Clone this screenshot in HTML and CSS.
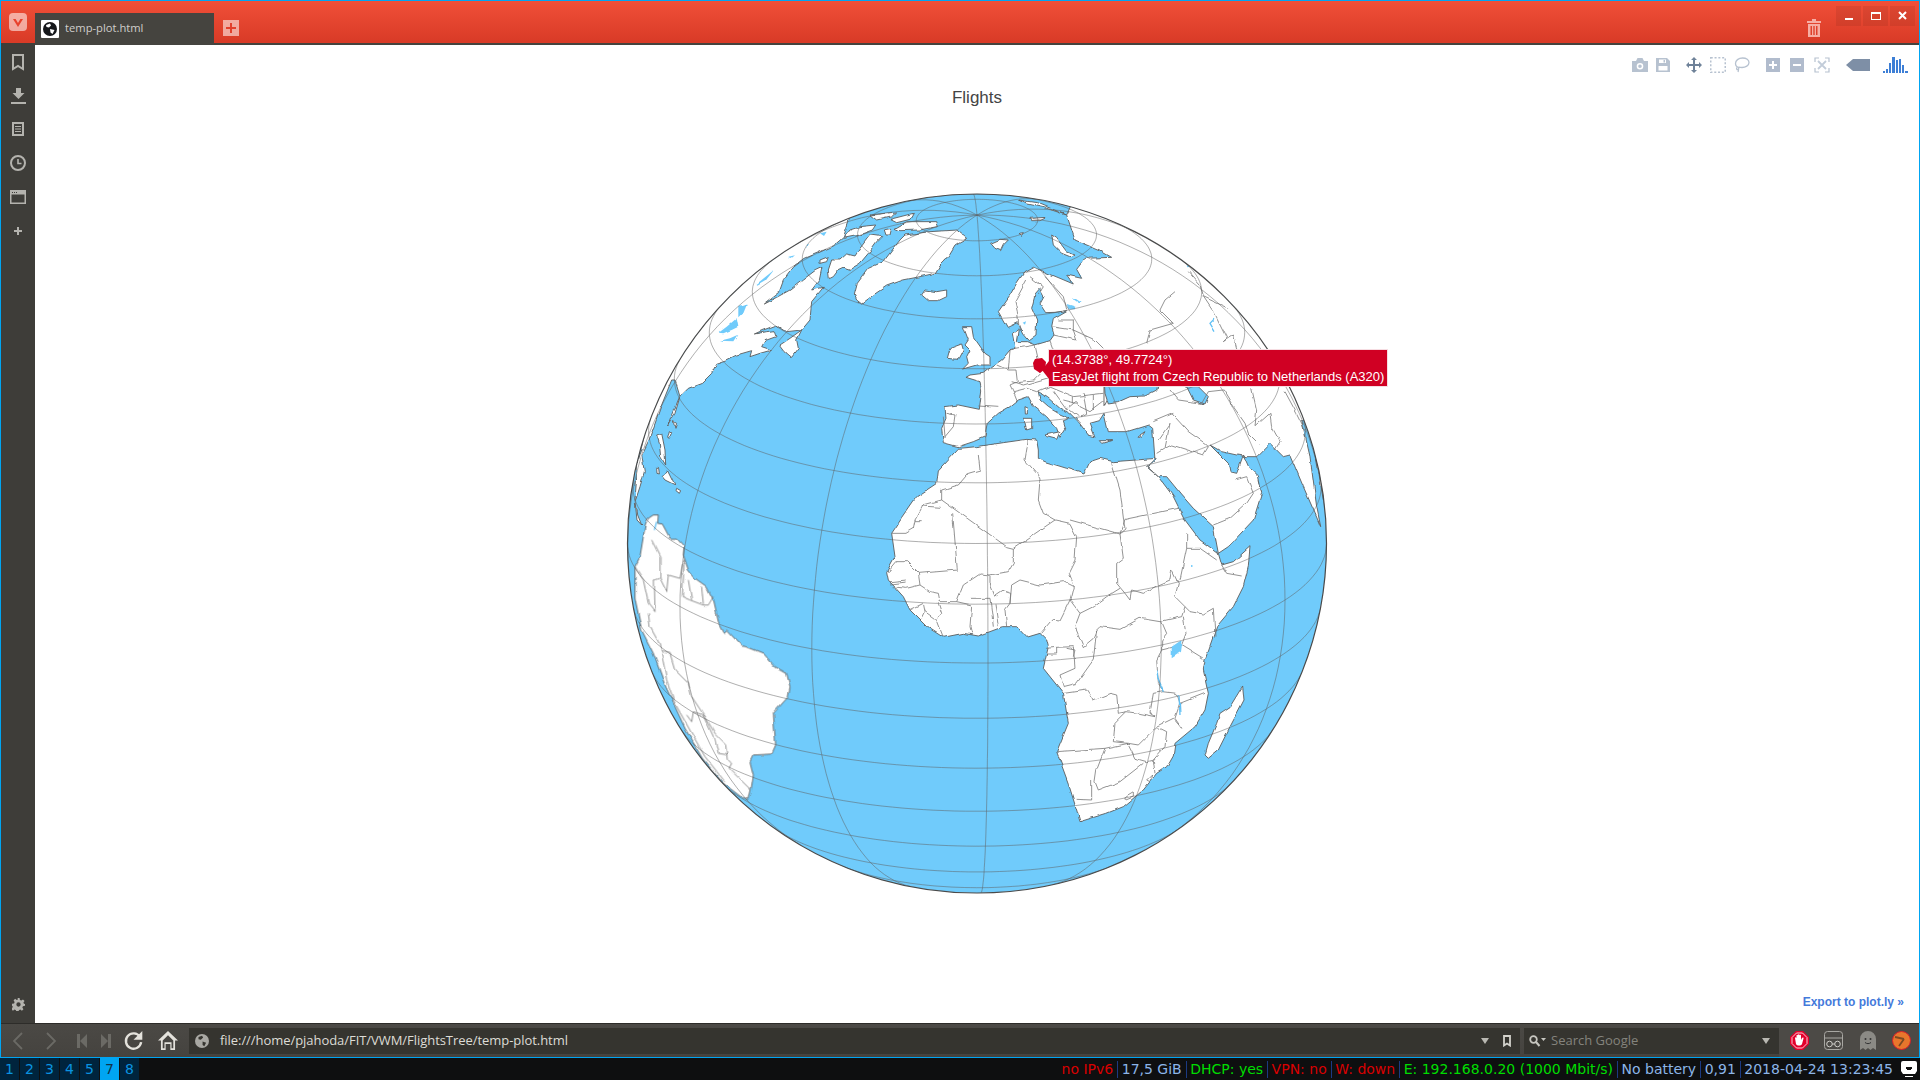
FILE: index.html
```html
<!DOCTYPE html>
<html lang="en">
<head>
<meta charset="utf-8">
<title>temp-plot.html</title>
<link rel="stylesheet" href="styles.css">
</head>
<body>
<div class="window">
  <header class="titlebar">
    <div class="logo"><svg width="18" height="18" viewBox="0 0 18 18"><rect width="18" height="18" rx="4" fill="#fff" fill-opacity=".55"/><path d="M4 6l5 8 5-8h-2.6L9 10 6.600 6z" fill="#e8412c"/></svg></div>
    <div class="tab">
      <span class="favicon"><svg width="18" height="18" viewBox="0 0 18 18"><rect width="18" height="18" rx="1" fill="#fff"/><circle cx="9" cy="9" r="7" fill="#15171a"/><path d="M5 5l4-1.500 1 2-2 2-2.500-.5zM9 9l4.500 1-2 4-2-1.500z" fill="#fff"/></svg></span>
      <span class="tab-title">temp-plot.html</span>
    </div>
    <div class="newtab"><svg width="16" height="16" viewBox="0 0 16 16"><path d="M7 3h2v4h4v2H9v4H7V9H3V7h4z" fill="#e2402d"/></svg></div>
    <div class="spacer"></div>
    <svg class="trash" width="14" height="18" viewBox="0 0 14 18"><path d="M0 2h5V0h4v2h5v2H0zM1 5h12v13H1zM3.500 7v9H5V7zM6.300 7v9h1.400V7zM9 7v9h1.500V7z" fill="#f6aea4" fill-rule="evenodd"/></svg>
    <div class="controls">
      <span class="ctl"><svg width="25" height="20"><rect x="9" y="12" width="8" height="2" fill="#fff"/></svg></span>
      <span class="ctl"><svg width="25" height="20"><rect x="8.500" y="6.500" width="9" height="7" fill="none" stroke="#fff"/><rect x="8" y="6" width="10" height="2" fill="#fff"/></svg></span>
      <span class="ctl"><svg width="25" height="20"><path d="M9 6l7 7M16 6l-7 7" stroke="#fff" stroke-width="2"/></svg></span>
    </div>
  </header>
  <div class="middle">
    <aside class="panel">
      <div class="panel-top">
        <svg width="12" height="17" viewBox="0 0 12 17"><path d="M1 1h10v14l-5-3-5 3z" fill="none" stroke="#b4b3ae" stroke-width="2"/></svg>
        <svg width="15" height="16" viewBox="0 0 15 16"><path d="M5 0h5v5h3.500L7.500 11 1.500 5H5zM0 14h15v2H0z" fill="#b4b3ae"/></svg>
        <svg width="12" height="14" viewBox="0 0 12 14"><path d="M0 0h12v14H0zM2 2v10h8V2zM3 4h6v1H3zM3 6.500h6v1H3zM3 9h6v1H3z" fill="#b4b3ae" fill-rule="evenodd"/></svg>
        <svg width="16" height="16" viewBox="0 0 16 16"><circle cx="8" cy="8" r="7" fill="none" stroke="#b4b3ae" stroke-width="2"/><path d="M8 4v4.500h3.500" fill="none" stroke="#b4b3ae" stroke-width="1.600"/></svg>
        <svg width="16" height="14" viewBox="0 0 16 14"><path d="M0 0h16v14H0zM1.500 4.500V12.500h13V4.500zM2 2v1h1V2zM4 2v1h1V2zM6 2v1h1V2z" fill="#b4b3ae" fill-rule="evenodd"/></svg>
        <svg width="8" height="8" viewBox="0 0 8 8"><path d="M3 0h2v3h3v2H5v3H3V5H0V3h3z" fill="#b4b3ae"/></svg>
      </div>
      <svg width="13" height="13" viewBox="0 0 24 24"><path d="M10 0h4l.7 3.500 2.600 1.100 3-2 2.800 2.800-2 3 1.100 2.600L24 10.700v3.600l-3.800.7-1.100 2.600 2 3-2.800 2.800-3-2-2.600 1.100-.7 3.500h-4l-.7-3.500-2.600-1.100-3 2-2.800-2.800 2-3L1.300 15 0 14.300v-3.600l3.800-.7 1.100-2.600-2-3 2.800-2.800 3 2 2.600-1.100zM12 8a4 4 0 100 8 4 4 0 000-8z" fill="#b4b3ae" fill-rule="evenodd"/></svg>
    </aside>
    <main class="plot">
      <svg class="map" viewBox="35 45 1884 978">
        <defs>
          <clipPath id="sphere"><circle cx="977" cy="543.500" r="349.500"/></clipPath>
          <filter id="coast" filterUnits="userSpaceOnUse" x="620" y="185" width="720" height="720">
            <feTurbulence type="fractalNoise" baseFrequency=".09" numOctaves="2" seed="4"/>
            <feDisplacementMap in="SourceGraphic" scale="3.500" xChannelSelector="R" yChannelSelector="G"/>
          </filter>
        </defs>
        <circle class="ocean" cx="977" cy="543.500" r="349.500"/>
        <g clip-path="url(#sphere)">
          <g filter="url(#coast)">
          <g transform="translate(620 180) scale(.33333)">
            <path class="land" d="M690,112 L670,172 L640,198 L600,216 L555,235 L520,262 L490,302 L478,335 L430,372 L470,352 L510,330 L548,300 L585,272 L606,262 L598,300 L575,330 L610,322 L575,365 L570,420 L545,450 L500,455 L470,435 L430,450 L403,462 L440,455 L462,452 L468,470 L435,482 L425,500 L455,510 L420,520 L390,530 L395,512 L350,525 L320,540 L290,550 L275,580 L245,610 L205,625 L178,652 L143,738 L165,700 L180,650 L165,600 L155,600 L125,675 L100,745 L87,780 L65,825 L73,875 L60,920 L47,960 L53,1005 L65,1035 L51,1020 L45,960 L51,880 L53,840 L65,800 L72,770 L40,770 L100,600 L200,400 L400,200 L500,130 Z"/>
            <path class="land" d="M480,495 L510,475 L545,450 L530,480 L535,505 L515,532 L495,515 Z"/>
            <path class="land" d="M628,296 L625,270 L635,240 L660,240 L680,222 L705,228 L720,205 L750,165 L785,170 L770,185 L745,220 L720,250 L690,268 L672,262 L655,270 L640,290 Z"/>
            <path class="land" d="M825,145 L860,125 L950,125 L955,140 L900,150 L840,152 Z"/>
            <path class="land" d="M670,175 L690,150 L720,140 L770,135 L760,150 L720,165 Z"/>
            <path class="land" d="M750,105 L830,96 L815,110 L770,120 Z"/>
            <path class="land" d="M810,118 L880,100 L870,118 L830,128 Z"/>
            <path class="land" d="M790,150 L815,145 L810,165 L795,165 Z"/>
            <path class="land" d="M600,240 L625,230 L620,245 L600,250 Z"/>
            <path class="land" d="M703,345 L712,310 L745,265 L790,245 L840,180 L855,165 L930,155 L1010,150 L1040,175 L1020,185 L1005,195 L990,220 L975,240 L960,255 L945,280 L900,290 L850,300 L800,318 L760,345 L725,372 L710,360 Z"/>
            <path class="land" d="M905,345 L915,330 L950,335 L980,330 L980,350 L955,362 L925,362 Z"/>
            <path class="land" d="M1112,190 L1140,178 L1165,180 L1150,195 L1142,212 L1125,205 Z"/>
            <path class="land" d="M1295,165 L1310,175 L1340,215 L1365,225 L1355,232 L1325,220 L1300,195 Z"/>
            <path class="land" d="M1230,115 L1280,112 L1260,122 L1235,122 Z"/>
            <path class="land" d="M1195,60 L1250,68 L1340,105 L1280,85 L1220,72 Z"/>
            <path class="land" d="M1197,160 L1210,158 L1205,166 Z"/>
            <path class="land" d="M110,765 L125,760 L135,810 L137,855 L122,830 L118,790 Z"/>
            <path class="land" d="M127,890 L143,870 L165,915 L135,900 Z"/>
            <path class="land" d="M107,865 L113,865 L115,882 L108,880 Z"/>
            <path class="land" d="M170,925 L182,932 L178,940 L168,932 Z"/>
            <path class="land" d="M160,725 L170,730 L165,745 Z"/>
            <path class="land" d="M148,755 L155,760 L148,778 L143,775 Z"/>
            <path class="lake" d="M296,458 L320,440 L350,415 L355,440 L335,450 L310,460 Z"/>
            <path class="lake" d="M300,482 L340,484 L352,465 L330,475 Z"/>
            <path class="lake" d="M355,378 L382,370 L370,400 L355,415 Z"/>
            <path class="lake" d="M410,312 L462,270 L440,298 L412,314 Z"/>
            <path class="lake" d="M600,160 L620,155 L612,168 Z"/>
            <path class="lake" d="M690,125 L715,118 L700,128 Z"/>
            <path class="lake" d="M505,230 L525,226 L515,234 Z"/>
            <path class="lake" d="M556,195 L564,192 L560,200 Z"/>
          </g>
          <g transform="translate(625 440) scale(.33333)">
            <path class="land" d="M70,235 L85,225 L100,225 L98,250 L112,252 L135,295 L155,295 L177,320 L175,345 L190,390 L210,415 L245,440 L265,480 L280,545 L297,578 L305,570 L350,618 L365,620 L415,640 L450,680 L485,700 L495,740 L490,770 L445,820 L452,915 L440,942 L385,945 L375,965 L385,1005 L378,1050 L372,1078 L350,1072 L295,1030 L232,955 L180,865 L118,730 L85,640 L50,570 L30,475 L30,380 L45,350 L55,290 L62,250 Z"/>
            <path class="border" d="M80,300 L105,350 L105,415 L125,455 L130,405 L165,415 L172,375 L178,360 L172,470 L195,480 L235,495 L250,495 L265,470"/>
            <path class="border" d="M190,420 L200,480 M230,440 L235,492"/>
            <path class="border" d="M30,380 L55,420 L70,490 L90,515 L88,420 L102,415"/>
            <path class="border" d="M70,520 L75,560 L100,605 L110,635 L135,640 L150,690 L190,730 L200,770 L240,830 L270,880 L305,915 L310,960 L320,970 L312,985 L378,1050"/>
            <path class="border" d="M110,640 L125,720 L150,790 L200,880 L240,950 L300,1025"/>
            <path class="border" d="M205,815 L235,825 L270,900 L280,940 L310,945"/>
            <path class="border" d="M205,815 L200,845 L185,825"/>
            <path class="lake thin" d="M95,245 L88,270"/>
          </g>
          <g transform="translate(880 430) scale(.33333)">
            <path class="land" d="M235,55 L290,50 L370,38 L440,28 L470,30 L475,60 L475,85 L495,95 L560,115 L612,132 L630,95 L660,85 L700,95 L770,90 L825,85 L800,110 L835,140 L880,200 L915,270 L960,330 L1015,370 L1025,405 L1060,395 L1110,350 L1105,410 L1090,470 L1060,530 L1010,590 L975,690 L970,720 L985,790 L975,840 L945,890 L885,940 L880,975 L860,1010 L830,1030 L790,1080 L730,1130 L680,1150 L600,1175 L590,1140 L565,1060 L530,965 L565,880 L550,790 L490,715 L505,650 L500,630 L480,610 L440,622 L410,590 L370,590 L295,618 L250,610 L190,622 L140,590 L90,540 L70,500 L25,450 L20,425 L45,380 L35,310 L65,265 L110,200 L170,160 L175,120 Z"/>
            <path class="land" d="M975,975 L985,940 L1010,880 L1020,850 L1050,830 L1088,768 L1092,810 L1045,900 L1015,960 L985,985 Z"/>
            <path class="border" d="M295,75 L300,120 L265,130 L235,165 L185,180 L185,210 L130,225 L105,270 L100,295 L75,310 L35,310"/>
            <path class="border" d="M125,228 L182,232 M105,272 L125,272"/>
            <path class="border" d="M185,210 L380,350 L400,355 L525,270"/>
            <path class="border" d="M218,250 L232,420 L115,430 L120,465 L150,485 L175,490 L180,515 L230,515 L250,465 L300,432 L330,435 L385,425 L400,400 L400,355"/>
            <path class="border" d="M115,430 L80,395 L50,395 L25,425 M120,465 L80,475 L35,470"/>
            <path class="border" d="M30,455 L80,450 M30,462 L80,456"/>
            <path class="border" d="M90,540 L130,520 L135,545 L125,565 M135,545 L170,570 L190,622 M175,520 L185,550 L170,570"/>
            <path class="border" d="M230,515 L275,525 L270,590 L275,610 M275,505 L330,505 L340,590 M345,520 L355,590 M380,590 L375,540 L390,520 L392,490 L370,483 L345,500 L330,460 L330,435"/>
            <path class="border" d="M390,520 L395,465 L420,450 L480,465 L550,455 L580,470 L570,510 L540,570 L520,568 L485,610"/>
            <path class="border" d="M445,30 L435,90 L470,130 L480,150 L475,210 L490,250 L525,270 L570,280 L590,320 L585,390 L565,430 L580,470"/>
            <path class="border" d="M570,270 L720,312 L735,268 L895,235 M695,100 L720,180 L735,300 L720,312 L730,385 L710,400 L710,460 L735,490 L750,510 L755,480 L790,490 L835,465 L870,450 L875,420 L895,460 L885,500 L915,530 L930,545 L970,552 L1000,535 L1005,620"/>
            <path class="border" d="M920,310 L920,355 L900,450 M920,355 L960,355 L1010,390 M1025,405 L1040,430 L1085,438"/>
            <path class="border" d="M570,510 L600,550 L640,530 L680,500 L720,475 M600,550 L585,590 L610,650 L640,625 L650,600 L660,590 L720,598 L780,565 L840,575 L860,570 L905,560 L915,530 M845,575 L860,610 L845,630 L845,660 L830,690 L835,760 L850,785 L820,790 L810,850 L825,860 L775,850 L740,845 L715,850 L710,795 L690,790 L640,810 L620,780 L552,790"/>
            <path class="border" d="M910,560 L918,610 L905,645 L970,685 M845,660 L905,645"/>
            <path class="border" d="M498,655 L530,652 L530,672 L498,672 M530,652 L580,650 L585,715 L540,735 L550,770 L590,760 L640,690 L650,600 M560,655 L585,660 L580,680"/>
            <path class="border" d="M850,785 L890,790 L900,820 L885,865 L905,895 L880,865 L830,890 L775,945 L745,940 L700,935 L705,880 L740,845 M830,890 L860,905 L855,950 L820,990 L800,995 L765,985 L745,945 M900,820 L975,790 M820,990 L825,1030"/>
            <path class="border" d="M530,965 L675,955 L745,940 M675,955 L650,1020 L645,1055 L655,1080 L720,1055 L790,1000 M635,1050 L635,1110 L590,1108"/>
            <path class="border" d="M735,1100 L760,1085 L760,1098 L735,1108 Z M800,1050 L815,1035 L810,1055 Z"/>
            <path class="lake" d="M875,650 L905,630 L900,665 L875,682 Z"/>
            <path class="lake thin" d="M830,720 L835,750 L850,785 M897,795 L900,855"/>
            <circle class="lakedot" cx="938" cy="408" r="3"/>
          </g>
          <g transform="translate(900 180) scale(.33333)">
            <path class="land" d="M175,800 L130,788 L125,745 L138,715 L135,680 L175,675 L238,688 L245,630 L240,605 L198,592 L210,585 L250,580 L275,560 L305,540 L330,510 L348,505 L340,460 L358,448 L352,485 L380,485 L405,495 L450,482 L462,465 L455,440 L460,415 L500,392 L465,397 L437,398 L420,372 L432,350 L420,328 L405,345 L395,385 L410,420 L408,465 L385,482 L368,462 L352,428 L322,442 L295,395 L330,345 L350,310 L372,278 L400,262 L432,275 L480,295 L520,312 L500,285 L545,295 L530,268 L555,235 L635,232 L600,212 L525,180 L500,105 L520,60 L700,100 L1000,300 L1250,650 L1300,960 L1270,960 L1230,720 L1205,720 L1230,830 L1250,980 L1262,1040 L1245,1000 L1210,920 L1170,825 L1150,830 L1110,790 L1070,830 L1040,830 L1010,825 L965,815 L930,795 L965,830 L985,850 L990,875 L1010,880 L1030,825 L1048,865 L1075,890 L1085,940 L1060,1020 L985,1100 L955,1120 L940,1040 L880,985 L845,945 L800,890 L775,890 L742,860 L765,840 L758,745 L745,735 L680,755 L625,755 L612,700 L598,722 L570,730 L585,770 L565,765 L535,725 L510,700 L480,685 L440,650 L415,635 L420,660 L445,682 L475,700 L510,715 L490,722 L497,745 L480,772 L470,745 L440,710 L400,678 L385,650 L355,660 L330,680 L295,700 L262,730 L255,770 L220,785 Z"/>
            <path class="land" d="M435,765 L480,755 L470,778 L440,770 Z"/>
            <path class="land" d="M372,715 L395,715 L395,745 L380,750 Z"/>
            <path class="land" d="M375,680 L385,685 L385,702 L376,702 Z"/>
            <path class="land" d="M598,782 L635,782 L605,790 Z"/>
            <path class="land" d="M712,770 L735,755 L722,775 Z"/>
            <path class="land" d="M612,610 L650,605 L612,680 Z"/>
            <path class="sea" d="M615,640 L612,590 L780,590 L770,630 L735,648 L690,650 L650,668 L625,672 Z"/>
            <path class="sea" d="M860,620 L880,660 L915,672 L925,650 L895,620 Z"/>
            <path class="lake" d="M500,372 L520,378 L525,388 L505,388 Z"/>
            <path class="lake" d="M520,352 L545,368 L538,370 L520,358 Z"/>
            <path class="lake" d="M368,428 L378,424 L375,434 Z"/>
            <path class="lake thin" d="M942,418 L930,430 L945,455"/>
            <path class="lake" d="M860,255 L870,260 L862,262 Z"/>
          </g>
          <g transform="translate(930 270) scale(.33333)">
            <path class="land" d="M100,170 L125,170 L130,200 L165,250 L180,260 L180,285 L140,285 L98,297 L115,280 L110,260 L120,240 L105,225 L115,210 Z"/>
            <path class="land" d="M52,265 L60,235 L95,222 L100,240 L85,268 Z"/>
            <path class="border" d="M50,430 L75,435 L70,470 L45,500 L40,440"/>
            <path class="border" d="M145,408 L205,412 M200,285 L235,300 L258,300 L262,335 L240,345 L250,365 L262,395"/>
            <path class="border" d="M240,242 L235,298 M258,235 L315,225 L325,270 L345,295 L310,330 L262,335"/>
            <path class="border" d="M245,335 L280,345 L350,325 M250,365 L290,355 L320,365 L357,350 L430,380 L520,370"/>
            <path class="border" d="M255,95 L262,125 L268,180 M255,95 L290,30 M300,20 L340,50 L325,75 M345,20 L400,80 L410,118"/>
            <path class="border" d="M365,170 L430,180 L430,150 L385,150 M370,195 L440,210 L430,180 M430,180 L495,210 L520,235 M360,212 L370,240 L356,238"/>
            <path class="border" d="M370,365 L410,420 L440,395 L450,410 L480,425 L520,395 M430,380 L430,400 M460,370 L470,430 L450,440 M490,375 L490,420"/>
            <path class="border" d="M400,390 L440,400 M420,420 L445,440"/>
          </g>
          <g transform="translate(1090 260) scale(.33333)">
            <path class="border" d="M255,95 L225,120 L210,150 L250,190 L180,210 L170,250 M295,35 L330,75 L340,110 L415,145 M340,110 L370,155 L410,235 L400,245 L430,225 L440,265"/>
            <path class="border" d="M400,390 L430,440 L465,490 L475,520 L505,550 M485,385 L500,450 L495,500 L540,460 L545,500 L570,545 L555,570 M240,390 L265,420 L335,430 L355,395 L400,390"/>
            <path class="border" d="M250,460 L190,485 M245,460 L295,515 L345,550 L355,560 M225,565 L245,555 L340,585 L355,560"/>
            <path class="border" d="M205,540 L240,490 L225,565 L200,580 M370,795 L420,775 L470,730 L490,700 L470,650 L435,660 M585,395 L620,460 L650,520"/>
          </g>
          </g>
          <path id="graticule" class="grid"/>
        </g>
        <circle class="rim" cx="977" cy="543.500" r="349.500"/>
        <path class="marker" d="M1035 359l7-1 4 4-1 7-5 4-6-4-1-6z"/>
      </svg>
      <div class="modebar">
        <div class="mb-group">
          <svg width="16" height="14" viewBox="0 0 16 14"><path d="M0 3h4l1.500-3h5L12 3h4v11H0zM8 5a3.300 3.300 0 100 6.600A3.300 3.300 0 008 5zM8 6.500a1.800 1.800 0 110 3.600 1.800 1.800 0 010-3.600z" fill="#b7c2d0" fill-rule="evenodd"/></svg>
          <svg width="14" height="14" viewBox="0 0 14 14"><path d="M0 0h11l3 3v11H0zM3 1.500V5h7V1.500zM7.500 2h1.500v2.500H7.500zM2.500 8v4.500h9V8z" fill="#b7c2d0" fill-rule="evenodd"/></svg>
        </div>
        <div class="mb-group">
          <svg width="16" height="16" viewBox="0 0 16 16"><path d="M8 0l3 3H9v4h4V5l3 3-3 3V9H9v4h2l-3 3-3-3h2V9H3v2L0 8l3-3v2h4V3H5z" fill="#6f8299"/></svg>
          <svg width="16" height="16" viewBox="0 0 16 16"><rect x=".75" y=".75" width="14.500" height="14.500" fill="none" stroke="#b7c2d0" stroke-width="1.500" stroke-dasharray="2 1.800"/></svg>
          <svg width="16" height="16" viewBox="0 0 16 16"><path d="M8.500 1C4.500 1 1.500 3.500 1.500 6.500c0 2 1.500 3.500 3.500 4 M8.500 1c4 0 6.500 2 6.500 4.500 0 3-3.500 5-7 5-1 0-2 0-3-.3 M3 10.500c-1 1 0 2.500 1 2 1 0 1-1.500 0-2 M4.500 12c0 1 0 2-.5 3" fill="none" stroke="#b7c2d0" stroke-width="1.300"/></svg>
        </div>
        <div class="mb-group wide">
          <svg width="14" height="14" viewBox="0 0 14 14"><path d="M0 0h14v14H0zM6 3v3H3v2h3v3h2V8h3V6H8V3z" fill="#b1bccd" fill-rule="evenodd"/></svg>
          <svg width="14" height="14" viewBox="0 0 14 14"><path d="M0 0h14v14H0zM3 6v2h8V6z" fill="#b1bccd" fill-rule="evenodd"/></svg>
          <svg width="16" height="16" viewBox="0 0 16 16"><path d="M1 5V1h4M11 1h4v4M15 11v4h-4M5 15H1v-4" fill="none" stroke="#b7c2d0" stroke-width="1.200"/><path d="M4 4l8 8M12 4l-8 8" stroke="#c2ccd9" stroke-width="1.800"/></svg>
        </div>
        <div class="mb-group">
          <svg width="24" height="12" viewBox="0 0 24 12"><path d="M0 6l7-6h17v12H7z" fill="#7e8fa6"/></svg>
        </div>
        <div class="mb-group logo-group">
          <svg width="25" height="16" viewBox="0 0 25 16"><path d="M0 14h2v2H0zM3 12h2v4H3zM6 6h2v10H6zM9 0h3v16H9zM13 3h2v13h-2zM16 2h2v14h-2zM19 8h2v8h-2zM22 14h3v2h-3z" fill="#3d7fd6"/></svg>
        </div>
      </div>
      <div class="plot-title">Flights</div>
      <div class="hover"><div>(14.3738°, 49.7724°)</div><div>EasyJet flight from Czech Republic to Netherlands (A320)</div></div>
      <a class="export">Export to plot.ly »</a>
    </main>
  </div>
  <div class="addressbar">
    <div class="nav">
      <svg class="nb" width="10" height="18" viewBox="0 0 10 18"><path d="M9 1L1 9l8 8" fill="none" stroke="#6b6a65" stroke-width="1.800"/></svg>
      <svg class="nf" width="10" height="18" viewBox="0 0 10 18"><path d="M1 1l8 8-8 8" fill="none" stroke="#6b6a65" stroke-width="1.800"/></svg>
      <svg class="nr" width="10" height="14" viewBox="0 0 10 14"><path d="M0 0h3v14H0zM10 0v14L3 7z" fill="#6b6a65"/></svg>
      <svg class="nl" width="10" height="14" viewBox="0 0 10 14"><path d="M10 0H7v14h3zM0 0v14l7-7z" fill="#6b6a65"/></svg>
      <svg class="nre" width="19" height="20" viewBox="0 0 16 17"><path d="M13.500 5A6.500 6.500 0 1014.500 9.500" fill="none" stroke="#e4e2dc" stroke-width="2"/><path d="M15.500 0v7.500H8z" fill="#e4e2dc"/></svg>
      <svg class="nh" width="20" height="19" viewBox="0 0 17 16"><path d="M8.500 0l8.500 8h-2.500v8h-4v-5h-4v5h-4V8H0zM4 8v6.500h1.500v-5h6v5H13V8L8.500 3.500z" fill="#e4e2dc" fill-rule="evenodd"/></svg>
    </div>
    <div class="urlfield">
      <svg width="14" height="14" viewBox="0 0 12 12"><circle cx="6" cy="6" r="6" fill="#a9a8a3"/><path d="M3 2.500l3-1 1 1.500L5 5 3 4.500zM6.500 6.500l3 1-1.500 3-1.500-1z" fill="#35342f"/></svg>
      <span class="url">file:///home/pjahoda/FIT/VWM/FlightsTree/temp-plot.html</span>
      <span class="drop"></span>
      <svg class="bm" width="8" height="12" viewBox="0 0 8 12"><path d="M1 1h6v9.500L4 8.500l-3 2z" fill="none" stroke="#d3d2cc" stroke-width="1.800"/></svg>
    </div>
    <div class="searchfield">
      <svg width="17" height="12" viewBox="0 0 17 12"><circle cx="4.500" cy="4.500" r="3.300" fill="none" stroke="#c7c6c0" stroke-width="1.800"/><path d="M7 7l3.500 4" stroke="#c7c6c0" stroke-width="2"/><path d="M12 3h5l-2.500 3z" fill="#c7c6c0"/></svg>
      <span class="search-text">Search Google</span>
      <span class="drop"></span>
    </div>
    <div class="ext">
      <svg width="19" height="19" viewBox="0 0 19 19"><path d="M6 0h7l6 6v7l-6 6H6l-6-6V6z" fill="#e3002b"/><path d="M6.500 2h6l4.500 4.500v6L12.500 17h-6L2 12.500v-6z" fill="none" stroke="#fff" stroke-width=".8"/><path d="M5 7c0-1 1.300-1 1.500 0V4.500c0-1 1.500-1 1.500 0V4c0-1 1.500-1 1.500 0v.5c0-1 1.500-1 1.500 0V9l1-2c.6-1 2-.500 1.500.5L12 13c-1 2-5 2-6 0z" fill="#fff"/></svg>
      <svg width="19" height="19" viewBox="0 0 19 19"><rect x=".5" y=".5" width="18" height="18" rx="3" fill="none" stroke="#a8a7a2"/><path d="M1 7h17" stroke="#a8a7a2"/><circle cx="5.500" cy="13" r="2.800" fill="none" stroke="#cfcec9"/><circle cx="13.500" cy="13" r="2.800" fill="none" stroke="#cfcec9"/><path d="M8.300 13h2.400" stroke="#cfcec9"/></svg>
      <svg width="16" height="19" viewBox="0 0 16 19"><path d="M0 19V8a8 8 0 0116 0v11l-3-2-2.500 2L8 17l-2.500 2L3 17z" fill="#8b8a85"/><circle cx="5.500" cy="8" r="1" fill="#333"/><circle cx="10.500" cy="8" r="1" fill="#333"/><path d="M5 11.500c2 1.500 4 1.500 6 0" stroke="#333" fill="none"/></svg>
      <svg width="19" height="19" viewBox="0 0 19 19"><circle cx="9.500" cy="9.500" r="9" fill="#e8762c" stroke="#d9202a"/><path d="M3 6l9 2M12 8l-5 7" stroke="#7c4a22" stroke-width="1.800" fill="none"/></svg>
    </div>
  </div>
</div>
<footer class="statusbar">
  <div class="workspaces">
    <span class="ws">1</span><span class="ws">2</span><span class="ws">3</span><span class="ws">4</span><span class="ws">5</span><span class="ws active">7</span><span class="ws">8</span>
  </div>
  <div class="status">
    <span class="si red">no IPv6</span><span class="si blue">17,5 GiB</span><span class="si green">DHCP: yes</span><span class="si red">VPN: no</span><span class="si red">W: down</span><span class="si green">E: 192.168.0.20 (1000 Mbit/s)</span><span class="si blue">No battery</span><span class="si blue">0,91</span><span class="si blue last">2018-04-24 13:23:45</span>
    <svg class="tray" width="16" height="16" viewBox="0 0 16 16"><path d="M2 0h12a2 2 0 012 2v8l-2 3H2l-2-3V2a2 2 0 012-2zM4 15h8v1H4z" fill="#fff"/><path d="M5 6h6v2h-1v1H6V8H5z" fill="#111"/></svg>
  </div>
</footer>
<script src="graticule.js"></script>
</body>
</html>
```
FILE: styles.css
```css
* { box-sizing: border-box; }
html, body { margin: 0; height: 100%; overflow: hidden; }
body { display: flex; flex-direction: column; width: 1920px; height: 1080px; background: #0e0f10; font-family: "Open Sans", "Noto Sans", sans-serif; }
.window { height: 1058px; display: flex; flex-direction: column; border: 1px solid #00a5f2; }
.titlebar { height: 44px; flex: none; display: flex; align-items: flex-start; background: linear-gradient(#f04f38, #d93b27 97%); border-bottom: 2px solid #44433e; }
.logo { width: 18px; height: 18px; margin: 12px 0 0 8px; }
.logo svg, .favicon svg, .newtab svg { display: block; }
.tab { width: 179px; height: 32px; margin: 12px 0 0 8px; background: #45443f; display: flex; align-items: center; padding-left: 6px; }
.favicon { width: 18px; height: 18px; }
.tab-title { margin-left: 6px; font-size: 11.200px; color: #cfcecb; position: relative; top: -2px; }
.newtab { width: 16px; height: 16px; margin: 19px 0 0 9px; background: rgba(255,255,255,.55); }
.spacer { flex: 1; }
.trash { margin: 18px 15px 0 0; }
.controls { display: flex; gap: 2px; margin: 5px 4px 0 0; }
.ctl { width: 25px; height: 20px; background: rgba(0,0,0,.07); }
.ctl svg { display: block; }
.middle { height: 978px; flex: none; display: flex; }
.panel { width: 34px; flex: none; background: #3e3d39; display: flex; flex-direction: column; align-items: center; justify-content: space-between; padding: 8px 0 12px; margin-top: -2px; position: relative; }
.panel-top { display: flex; flex-direction: column; align-items: center; }
.panel-top svg { display: block; }
.panel-top svg:nth-child(1) { margin-top: 3px; }
.panel-top svg:nth-child(2) { margin-top: 17px; }
.panel-top svg:nth-child(3) { margin-top: 18px; }
.panel-top svg:nth-child(4) { margin-top: 19px; }
.panel-top svg:nth-child(5) { margin-top: 19px; }
.panel-top svg:nth-child(6) { margin-top: 23px; }
.plot { flex: 1; position: relative; background: #fff; overflow: hidden; }
.map { display: block; width: 100%; height: 100%; }
.ocean { fill: #70cbfb; }
.land { fill: #fff; stroke: #5c5c5c; stroke-width: .9; vector-effect: non-scaling-stroke; stroke-linejoin: round; }
.border { fill: none; stroke: #777; stroke-width: .8; vector-effect: non-scaling-stroke; stroke-linejoin: round; }
.sea { fill: #70cbfb; stroke: #5c5c5c; stroke-width: .9; vector-effect: non-scaling-stroke; }
.lake { fill: #70cbfb; stroke: none; }
.lake.thin { fill: none; stroke: #5fc0f5; stroke-width: 1.300; vector-effect: non-scaling-stroke; }
.lakedot { fill: #70cbfb; }
.grid { fill: none; stroke: rgba(95,95,95,.5); stroke-width: 1; }
.rim { fill: none; stroke: #4a4a4a; stroke-width: 1.200; }
.marker { fill: #d00023; }
.modebar { position: absolute; top: 12px; right: 11px; display: flex; align-items: center; gap: 16px; }
.mb-group { display: flex; align-items: center; gap: 8px; }
.mb-group.wide { gap: 10px; }
.mb-group.logo-group { margin-left: -3px; }
.mb-group svg { display: block; }
.plot-title { position: absolute; top: 42px; left: 0; width: 1884px; text-align: center; font: 17px/22px "Liberation Sans", Arial, sans-serif; color: #444; }
.hover { position: absolute; left: 1013px; top: 304px; width: 340px; height: 38px; background: #d00023; border: 1px solid #f6dde2; padding: 1px 3px; font: 13px/17px "Liberation Sans", Arial, sans-serif; color: #fff; white-space: nowrap; }
.hover::before { content: ""; position: absolute; left: -7px; top: 11px; border-style: solid; border-width: 9px 7px 9px 0; border-color: transparent #d00023 transparent transparent; }
.export { position: absolute; right: 15px; top: 950px; font: bold 12px/14px "Liberation Sans", Arial, sans-serif; color: #447adb; }
.addressbar { height: 34px; flex: none; display: flex; align-items: center; background: linear-gradient(#4b4945, #45433f); border-top: 1px solid #2d2c29; }
.nav { width: 188px; height: 100%; flex: none; display: flex; align-items: center; padding-left: 12px; }
.nf { margin-left: 23px; }
.nr { margin-left: 21px; }
.nl { margin-left: 14px; }
.nre { margin-left: 13px; }
.nh { margin-left: 15px; }
.urlfield { width: 1331px; height: 26px; flex: none; background: #35342f; display: flex; align-items: center; padding: 0 8px 0 6px; }
.url { margin-left: 11px; font-size: 13px; line-height: 24px; height: 26px; color: #dddcd6; flex: 1; white-space: nowrap; letter-spacing: -.05px; }
.drop { width: 0; height: 0; border-style: solid; border-width: 6px 4px 0; border-color: #b9b8b2 transparent transparent; }
.bm { margin-left: 14px; margin-right: 1px; }
.searchfield { width: 255px; height: 26px; flex: none; margin-left: 4px; background: #35342f; display: flex; align-items: center; padding: 0 9px 0 5px; }
.search-text { margin-left: 5px; flex: 1; font-size: 13px; line-height: 24px; height: 26px; color: #84837d; }
.ext { flex: 1; display: flex; align-items: center; height: 100%; padding-left: 11px; gap: 15px; background: #4c4a46; }
.ext svg { display: block; }
.ext svg:nth-child(3) { margin-left: 2px; }
.ext svg:nth-child(4) { margin-left: 1px; }
.statusbar { height: 22px; flex: none; display: flex; justify-content: space-between; align-items: center; background: #0e0f10; font: 14px/22px "DejaVu Sans", sans-serif; }
.workspaces { display: flex; height: 22px; gap: 0; }
.ws { width: 20px; text-align: center; background: #00243d; color: #0a93e0; border-right: 1px solid #0e0f10; line-height: 23px; }
.ws.active { background: #00a5f2; color: #10324a; }
.status { display: flex; align-items: center; height: 22px; padding-right: 3px; }
.si { padding: 0 4px 0 3.500px; border-right: 1px solid #1c3a82; line-height: 17px; white-space: nowrap; position: relative; }
.si.last { border-right: none; padding-right: 8px; }
.red { color: #d90000; }
.blue { color: #8cb5e8; }
.green { color: #00dd00; }
.tray { display: block; }
```
FILE: graticule.js
```js
(function () {
  var rad = Math.PI / 180, cx = 977, cy = 543.5, R = 349.5;
  var phi0 = 20 * rad, lam0 = -1.8 * rad;
  function project(lat, lon) {
    var c = Math.cos(lat * rad), s = Math.sin(lat * rad), dl = lon * rad - lam0;
    return {
      x: cx + R * c * Math.sin(dl),
      y: cy - R * (Math.cos(phi0) * s - Math.sin(phi0) * c * Math.cos(dl)),
      front: Math.sin(phi0) * s + Math.cos(phi0) * c * Math.cos(dl) >= 0
    };
  }
  function line(points) {
    var d = "", pen = false;
    points.forEach(function (p) {
      if (!p.front) { pen = false; return; }
      d += (pen ? "L" : "M") + p.x.toFixed(1) + " " + p.y.toFixed(1);
      pen = true;
    });
    return d;
  }
  var d = "", lat, lon, pts;
  for (lat = -60; lat <= 80; lat += 10) {
    pts = [];
    for (lon = -180; lon <= 180; lon += 2) pts.push(project(lat, lon));
    d += line(pts);
  }
  for (lon = -180; lon < 180; lon += 30) {
    pts = [];
    for (lat = -90; lat <= 90; lat += 2) pts.push(project(lat, lon));
    d += line(pts);
  }
  document.getElementById("graticule").setAttribute("d", d);
})();
```
